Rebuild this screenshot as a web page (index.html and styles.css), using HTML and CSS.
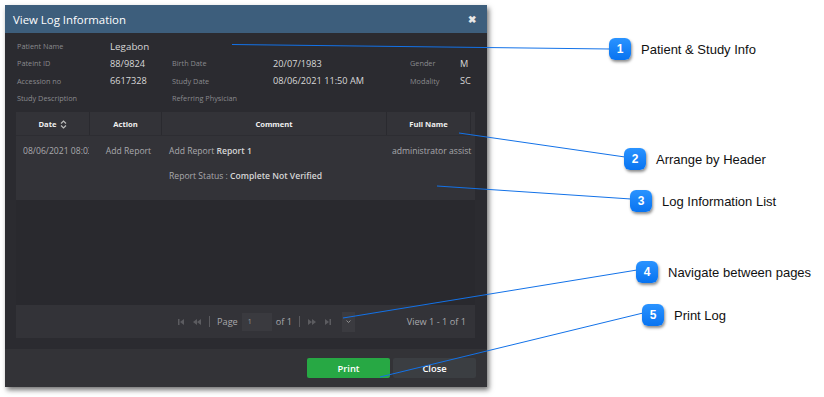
FILE: index.html
```html
<!DOCTYPE html>
<html>
<head>
<meta charset="utf-8">
<link rel="stylesheet" href="styles.css">
</head>
<body>
<div class="page">
  <div class="dialog">
    <div class="titlebar">
      <span class="title">View Log Information</span>
      <span class="close">&#10006;</span>
    </div>
    <div class="info">
      <div class="lbl">Patient Name</div><div class="val big">Legabon</div><div></div><div></div><div></div><div></div>
      <div class="lbl">Pateint ID</div><div class="val">88/9824</div><div class="lbl">Birth Date</div><div class="val">20/07/1983</div><div class="lbl">Gender</div><div class="val">M</div>
      <div class="lbl">Accession no</div><div class="val">6617328</div><div class="lbl">Study Date</div><div class="val">08/06/2021 11:50 AM</div><div class="lbl">Modality</div><div class="val">SC</div>
      <div class="lbl">Study Description</div><div></div><div class="lbl">Referring Physician</div><div></div><div></div><div></div>
    </div>
    <div class="panel">
      <div class="thead">
        <div class="th c1">Date <svg class="sort" width="7" height="9" viewBox="0 0 7 9"><path d="M1 3.5 L3.5 1 L6 3.5" fill="none" stroke="#bbb" stroke-width="1.2"/><path d="M1 5.5 L3.5 8 L6 5.5" fill="none" stroke="#bbb" stroke-width="1.2"/></svg></div>
        <div class="th c2">Action</div>
        <div class="th c3">Comment</div>
        <div class="th c4">Full Name</div>
      </div>
      <div class="row">
        <div class="td c1"><span class="clip">08/06/2021 08:03</span></div>
        <div class="td c2">Add Report</div>
        <div class="td c3">
          <div>Add Report <b>Report 1</b></div>
          <div class="line2">Report Status : <b>Complete Not Verified</b></div>
        </div>
        <div class="td c4">administrator assist</div>
      </div>
      <div class="empty"></div>
      <div class="pager">
        <div class="pgctl">
          <svg width="8" height="8" viewBox="0 0 8 8"><rect x="1" y="1" width="1.5" height="6" fill="#5c5c60"/><path d="M7 1 L3 4 L7 7Z" fill="#5c5c60"/></svg>
          <svg width="10" height="8" viewBox="0 0 10 8"><path d="M5 1 L1 4 L5 7Z M9 1 L5 4 L9 7Z" fill="#5c5c60"/></svg>
          <span class="sep"></span>
          <span class="ptxt">Page</span>
          <span class="pinput">1</span>
          <span class="ptxt">of 1</span>
          <span class="sep"></span>
          <svg width="10" height="8" viewBox="0 0 10 8"><path d="M1 1 L5 4 L1 7Z M5 1 L9 4 L5 7Z" fill="#5c5c60"/></svg>
          <svg width="8" height="8" viewBox="0 0 8 8"><path d="M1 1 L5 4 L1 7Z" fill="#5c5c60"/><rect x="5.5" y="1" width="1.5" height="6" fill="#5c5c60"/></svg>
          <span class="psel"><svg width="5" height="3" viewBox="0 0 5 3"><path d="M0.5 0.5 L2.5 2.5 L4.5 0.5" fill="none" stroke="#999" stroke-width="0.9"/></svg></span>
        </div>
        <div class="view">View 1 - 1 of 1</div>
      </div>
    </div>
    <div class="footer">
      <span class="btn print">Print</span>
      <span class="btn closebtn">Close</span>
    </div>
  </div>

  <svg class="lines" width="824" height="397" viewBox="0 0 824 397">
    <g stroke="#1372e8" stroke-width="1" fill="none">
      <line x1="232" y1="44.5" x2="610" y2="49"/>
      <line x1="459" y1="133" x2="625" y2="157"/>
      <line x1="437" y1="186" x2="631" y2="199"/>
      <line x1="343" y1="318" x2="637" y2="270"/>
      <line x1="380" y1="377" x2="643" y2="313"/>
    </g>
  </svg>

  <div class="callout" style="left:609px;top:38px"><span class="badge">1</span><span class="ctext">Patient &amp; Study Info</span></div>
  <div class="callout" style="left:624px;top:148px"><span class="badge">2</span><span class="ctext">Arrange by Header</span></div>
  <div class="callout" style="left:630px;top:190px"><span class="badge">3</span><span class="ctext">Log Information List</span></div>
  <div class="callout" style="left:636px;top:261px"><span class="badge">4</span><span class="ctext">Navigate between pages</span></div>
  <div class="callout" style="left:642px;top:304px"><span class="badge">5</span><span class="ctext">Print Log</span></div>
</div>
</body>
</html>
```

FILE: styles.css
```css
* { box-sizing: border-box; }
html, body { margin: 0; padding: 0; background: #fff; }
.page {
  position: relative;
  width: 824px;
  height: 397px;
  overflow: hidden;
  padding: 5px 0 0 5px;
  font-family: "Open Sans", "Noto Sans", sans-serif;
}
.dialog {
  width: 482px;
  height: 382px;
  background: #2b2b30;
  box-shadow: 2px 3px 5px rgba(0,0,0,0.55);
  display: flex;
  flex-direction: column;
}
.titlebar {
  height: 28px;
  background: #3d5e7c;
  display: flex;
  align-items: center;
  justify-content: space-between;
  padding: 0 11px 0 8px;
  flex: none;
}
.title { color: #fff; font-size: 11.4px; }
.close { color: #e8e8e8; font-size: 10px; font-weight: bold; }
.info {
  display: grid;
  grid-template-columns: 93px 62px 101px 137px 50px 20px;
  grid-auto-rows: 17.5px;
  padding: 4px 0 0 12px;
  height: 79px;
  flex: none;
  align-items: center;
}
.lbl { color: #8a8a8e; font-size: 7.3px; white-space: nowrap; }
.val { color: #d8d8d8; font-size: 9.2px; white-space: nowrap; }
.val.big { font-size: 9.8px; padding-top: 2px; }
.panel {
  margin: 0 12px 0 11px;
  background: #333338;
  height: 226px;
  flex: none;
  display: flex;
  flex-direction: column;
}
.thead {
  display: flex;
  height: 24px;
  flex: none;
  margin-right: 4px;
  border-bottom: 1px solid #2d2d32;
}
.th {
  color: #f0f0f0;
  font-size: 7.6px;
  font-weight: bold;
  display: flex;
  align-items: center;
  justify-content: center;
  border-right: 1px solid #2a2a2f;
  gap: 3px;
}
.c1 { width: 74px; }
.c2 { width: 72px; }
.c3 { width: 225px; }
.c4 { width: 84px; }
.sort { margin-top: 1px; }
.row {
  display: flex;
  height: 64px;
  flex: none;
}
.td {
  color: #a9a9ad;
  font-size: 8.6px;
  padding-top: 9px;
  white-space: nowrap;
}
.td b { color: #d6d6d6; font-weight: 600; }
.row .c1 { padding-left: 7px; overflow: hidden; padding-right: 1px; }
.row .c2 { text-align: center; padding-left: 5px; }
.row .c3 { padding-left: 7px; }
.row .c4 { padding-left: 5px; width: 84px; }
.line2 { margin-top: 13px; }
.clip { display: block; overflow: hidden; }
.empty {
  height: 105px;
  flex: none;
  background: #29292e;
}
.pager {
  flex: 1;
  display: flex;
  align-items: center;
  justify-content: space-between;
  padding: 0 9px 0 161px;
}
.pgctl { display: flex; align-items: center; gap: 7px; }
.sep { width: 1px; height: 11px; background: #5a5a5e; }
.ptxt { color: #a8a8ac; font-size: 9.2px; }
.pinput {
  width: 30px;
  height: 18px;
  background: #3a3a3f;
  color: #999;
  font-size: 7px;
  padding: 4px 0 0 6px;
  margin: 0 -3px;
}
.psel {
  width: 13px;
  height: 20px;
  background: #3b3b40;
  display: flex;
  align-items: center;
  justify-content: center;
  margin-left: 3px;
}
.view { color: #a8a8ac; font-size: 9.2px; }
.footer {
  margin-top: 11px;
  flex: 1;
  background: #333337;
  display: flex;
  justify-content: flex-end;
  align-items: flex-start;
  padding: 9px 11px 0 0;
  gap: 3px;
}
.btn {
  width: 83px;
  height: 20px;
  border-radius: 2px;
  color: #fff;
  font-size: 9.4px;
  font-weight: 600;
  display: flex;
  align-items: center;
  justify-content: center;
}
.print { background: #27a844; }
.closebtn { background: #3b3e42; }
.lines {
  position: absolute;
  left: 0;
  top: 0;
  pointer-events: none;
}
.callout {
  position: absolute;
  display: flex;
  align-items: center;
  gap: 10px;
}
.badge {
  width: 22px;
  height: 22px;
  border-radius: 6px;
  background: linear-gradient(#2a93ff, #0873f0);
  box-shadow: 1px 2px 3px rgba(0,0,0,0.45);
  color: #fff;
  font-family: "Liberation Sans", Arial, sans-serif;
  font-weight: bold;
  font-size: 12px;
  display: flex;
  align-items: center;
  justify-content: center;
}
.ctext {
  font-family: "Liberation Sans", Arial, sans-serif;
  font-size: 13px;
  color: #111;
  white-space: nowrap;
}
```
